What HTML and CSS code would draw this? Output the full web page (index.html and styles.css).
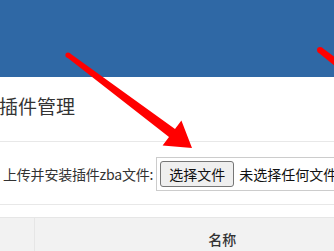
FILE: index.html
```html
<!DOCTYPE html>
<html lang="zh-CN">
<head>
  <meta charset="UTF-8" />
  <meta name="viewport" content="width=device-width, initial-scale=1.0"/>
  <title>插件管理</title>
  <link rel="stylesheet" href="styles.css">
</head>
<body>
  <div class="topbar"></div>

  <div class="main">
    <!-- 标题 -->
    <div class="title-bar">
      <h2 class="page-title">插件管理</h2>
    </div>

    <!-- 上传 -->
    <div class="upload-row">
      <span class="upload-label">上传并安装插件zba文件:</span>
      <div class="file-box">
        <span class="file-btn">选择文件</span>
        <span class="file-name">未选择任何文件</span>
      </div>
    </div>

    <table class="plugin-table">
      <thead>
        <tr>
          <th class="col-check"></th>
          <th class="col-name">名称</th>
        </tr>
      </thead>
    </table>
  </div>

  <svg class="arrows" width="334" height="251" viewBox="0 0 334 251">
    <circle cx="68" cy="55" r="2.6" fill="#f00"/>
    <polygon fill="#f00" points="69.5,53 175,129 181.4,120.5 192,148 162.6,145.5 169,137 66.5,57"/>
    <circle cx="320" cy="50" r="3" fill="#f00"/>
    <polygon fill="#f00" points="321.8,47.6 340,61 336,67 318.2,52.4"/>
  </svg>
</body>
</html>
```

FILE: styles.css
```css
* {
  box-sizing: border-box;
}
html, body {
  margin: 0;
  background: #fff;
  font-family: "Noto Sans CJK SC", "Noto Sans", sans-serif;
  color: #333;
  overflow: hidden;
}

.topbar {
  height: 77px;
  background: #2f68a5;
}

.main {
  width: 460px;
}

.title-bar {
  padding: 14px 0 20px;
  border-bottom: 1px solid #e8e8e8;
}

.page-title {
  margin: 0 0 0 -1px;
  font-size: 19px;
  font-weight: normal;
  line-height: 30px;
  color: #333;
}

.upload-row {
  display: flex;
  align-items: center;
  gap: 3px;
  padding: 15px 0 13px 3px;
  border-bottom: 1px solid #e8e8e8;
  font-size: 14px;
}

.upload-label {
  letter-spacing: -0.2px;
}

.file-box {
  display: flex;
  align-items: center;
  width: 260px;
  height: 34px;
  padding: 0 3px;
  border: 1px solid #ccc;
  background: #fff;
}

.file-btn {
  height: 26px;
  line-height: 24px;
  padding: 0 8px;
  background: #efefef;
  border: 1px solid #767676;
  border-radius: 3px;
  color: #111;
}

.file-name {
  margin-left: 5px;
  color: #111;
}

.plugin-table {
  margin-top: 12px;
  border-collapse: collapse;
  width: 410px;
}

.plugin-table th {
  height: 42px;
  background: #f2f2f2;
  border-top: 1px solid #e6e6e6;
  font-size: 14px;
  font-weight: 500;
  color: #333;
}

.col-check {
  width: 34px;
  border-right: 1px solid #e6e6e6;
}

.arrows {
  position: absolute;
  left: 0;
  top: 0;
}
```
